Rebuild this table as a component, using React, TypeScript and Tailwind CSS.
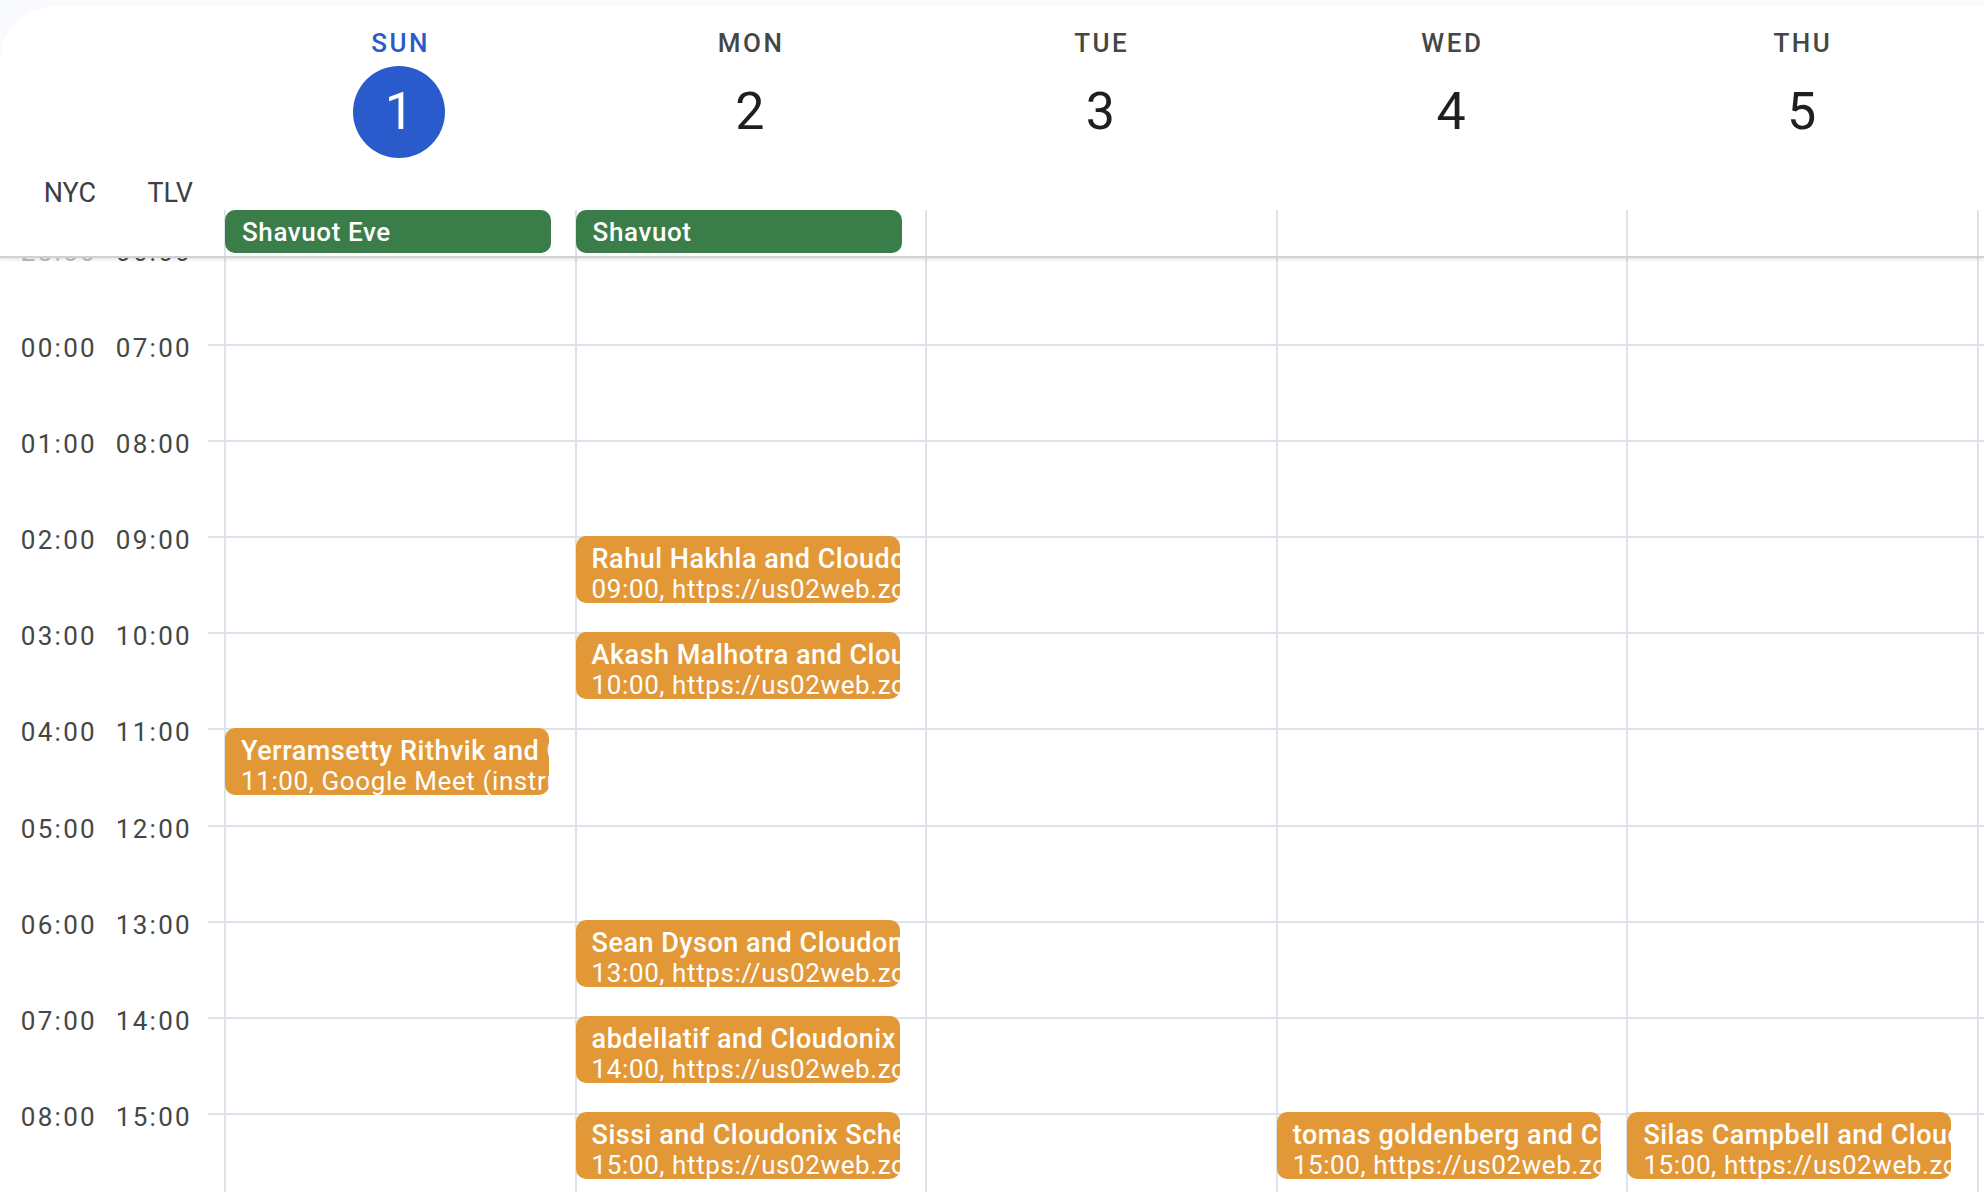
import React from "react";

const HOUR = 96.1;

const DAYS = [
  { name: "SUN", date: 1, today: true },
  { name: "MON", date: 2 },
  { name: "TUE", date: 3 },
  { name: "WED", date: 4 },
  { name: "THU", date: 5 },
  { name: "FRI", date: 6 },
  { name: "SAT", date: 7 },
];

// all-day items, keyed by column
const ALL_DAY: Record<number, string> = { 0: "Shavuot Eve", 1: "Shavuot" };

// hour is TLV time
const EVENTS = [
  { day: 0, hour: 11, title: "Yerramsetty Rithvik and Cloudonix Scheduling", detail: "11:00, Google Meet (instructions in description)" },
  { day: 1, hour: 9, title: "Rahul Hakhla and Cloudonix Scheduling", detail: "09:00, https://us02web.zoom.us/j/84512" },
  { day: 1, hour: 10, title: "Akash Malhotra and Cloudonix Scheduling", detail: "10:00, https://us02web.zoom.us/j/81277" },
  { day: 1, hour: 13, title: "Sean Dyson and Cloudonix Scheduling", detail: "13:00, https://us02web.zoom.us/j/86630" },
  { day: 1, hour: 14, title: "abdellatif and Cloudonix Scheduling", detail: "14:00, https://us02web.zoom.us/j/83104" },
  { day: 1, hour: 15, title: "Sissi and Cloudonix Scheduling", detail: "15:00, https://us02web.zoom.us/j/89921" },
  { day: 3, hour: 15, title: "tomas goldenberg and Cloudonix Scheduling", detail: "15:00, https://us02web.zoom.us/j/82048" },
  { day: 4, hour: 15, title: "Silas Campbell and Cloudonix Scheduling", detail: "15:00, https://us02web.zoom.us/j/87713" },
];

// NYC hours shown in the scroller, starting at 23:00 the day before
const SLOTS = Array.from({ length: 14 }, (_, i) => i - 1);

const fmt = (h: number) => String(((h % 24) + 24) % 24).padStart(2, "0") + ":00";

function DayHeader({ name, date, today }: { name: string; date: number; today?: boolean }) {
  return (
    <div className="w-[350.6px] shrink-0 flex flex-col items-center">
      <div
        className={`h-[30px] text-[26px] leading-[30px] font-medium tracking-[2.5px] pl-[2.5px] ${
          today ? "text-[#2a5bcc]" : "text-[#444746]"
        }`}
      >
        {name}
      </div>
      <div
        className={`mt-[8px] w-[92px] h-[92px] rounded-full flex items-center justify-center text-[52px] leading-none ${
          today ? "bg-[#2a5bcc] text-white" : "text-[#1f1f1f]"
        }`}
      >
        {date}
      </div>
    </div>
  );
}

export default function App() {
  return (
    <div className="w-[1984px] h-[1192px] overflow-hidden bg-[#f8fafd] pt-[6px] font-['Roboto','Noto_Sans',sans-serif]">
      <div className="h-full bg-white rounded-tl-[56px] overflow-hidden flex flex-col">
        {/* Header */}
        <div className="relative z-10 bg-white border-b-2 border-[#cfd1d3] shadow-[0_2px_3px_rgba(60,64,67,0.12)] pt-[22px]">
          <div className="flex">
            <div className="w-[224px] shrink-0" />
            {DAYS.map((d) => (
              <DayHeader key={d.name} {...d} />
            ))}
          </div>

          <div className="flex mt-[20px] text-[27px] leading-[30px] text-[#3c4043]">
            <div className="w-[96px] text-right">NYC</div>
            <div className="w-[97px] text-right">TLV</div>
          </div>

          {/* all-day row */}
          <div className="flex mt-[2px]">
            <div className="w-[224px] shrink-0" />
            {DAYS.map((d, i) => (
              <div key={d.name} className="w-[350.6px] shrink-0 h-[46px] border-l-2 border-[#dde3ea]">
                {ALL_DAY[i] && (
                  <div className="-ml-px w-[326px] h-[43px] rounded-[10px] bg-[#3b7d48] text-white flex items-center pl-[17px] text-[26px] leading-[30px] font-medium tracking-[0.6px] whitespace-nowrap overflow-hidden">
                    {ALL_DAY[i]}
                  </div>
                )}
              </div>
            ))}
          </div>
        </div>

        {/* Time grid */}
        <div className="flex-1 overflow-hidden">
          <div className="flex -mt-[10px]">
            {/* gutter */}
            <div className="w-[224px] shrink-0 flex flex-col">
              {SLOTS.map((h) => (
                <div key={h} className="h-[96.1px] flex items-start">
                  <div className={`w-[97px] text-right -mt-[11px] text-[26px] leading-[30px] tracking-[2.3px] ${h < 0 ? "text-[#b9bcbf]" : "text-[#444746]"}`}>
                    {fmt(h)}
                  </div>
                  <div className="w-[95px] text-right -mt-[11px] text-[26px] leading-[30px] tracking-[2.3px] text-[#444746]">
                    {fmt(h + 7)}
                  </div>
                  <div className="w-[16px]" />
                  <div className="w-[16px] border-t-2 border-[#dde3ea]" />
                </div>
              ))}
            </div>

            {DAYS.map((d, i) => (
              <div key={d.name} className="relative w-[350.6px] shrink-0 border-l-2 border-[#dde3ea] flex flex-col">
                {SLOTS.map((h) => (
                  <div key={h} className="h-[96.1px] border-t-2 border-[#dde3ea]" />
                ))}
                {EVENTS.filter((e) => e.day === i).map((e) => (
                  <div
                    key={e.hour}
                    className="absolute -left-px w-[324px] h-[67px] rounded-[10px] bg-[#e39838] text-white pl-[16px] pt-[8px] overflow-hidden whitespace-nowrap leading-[30px]"
                    style={{ top: (e.hour - 6) * HOUR - 0.5 }}
                  >
                    <div className="text-[27px] font-medium tracking-[0.5px]">{e.title}</div>
                    <div className="text-[26px] tracking-[0.6px]">{e.detail}</div>
                  </div>
                ))}
              </div>
            ))}
          </div>
        </div>
      </div>
    </div>
  );
}
